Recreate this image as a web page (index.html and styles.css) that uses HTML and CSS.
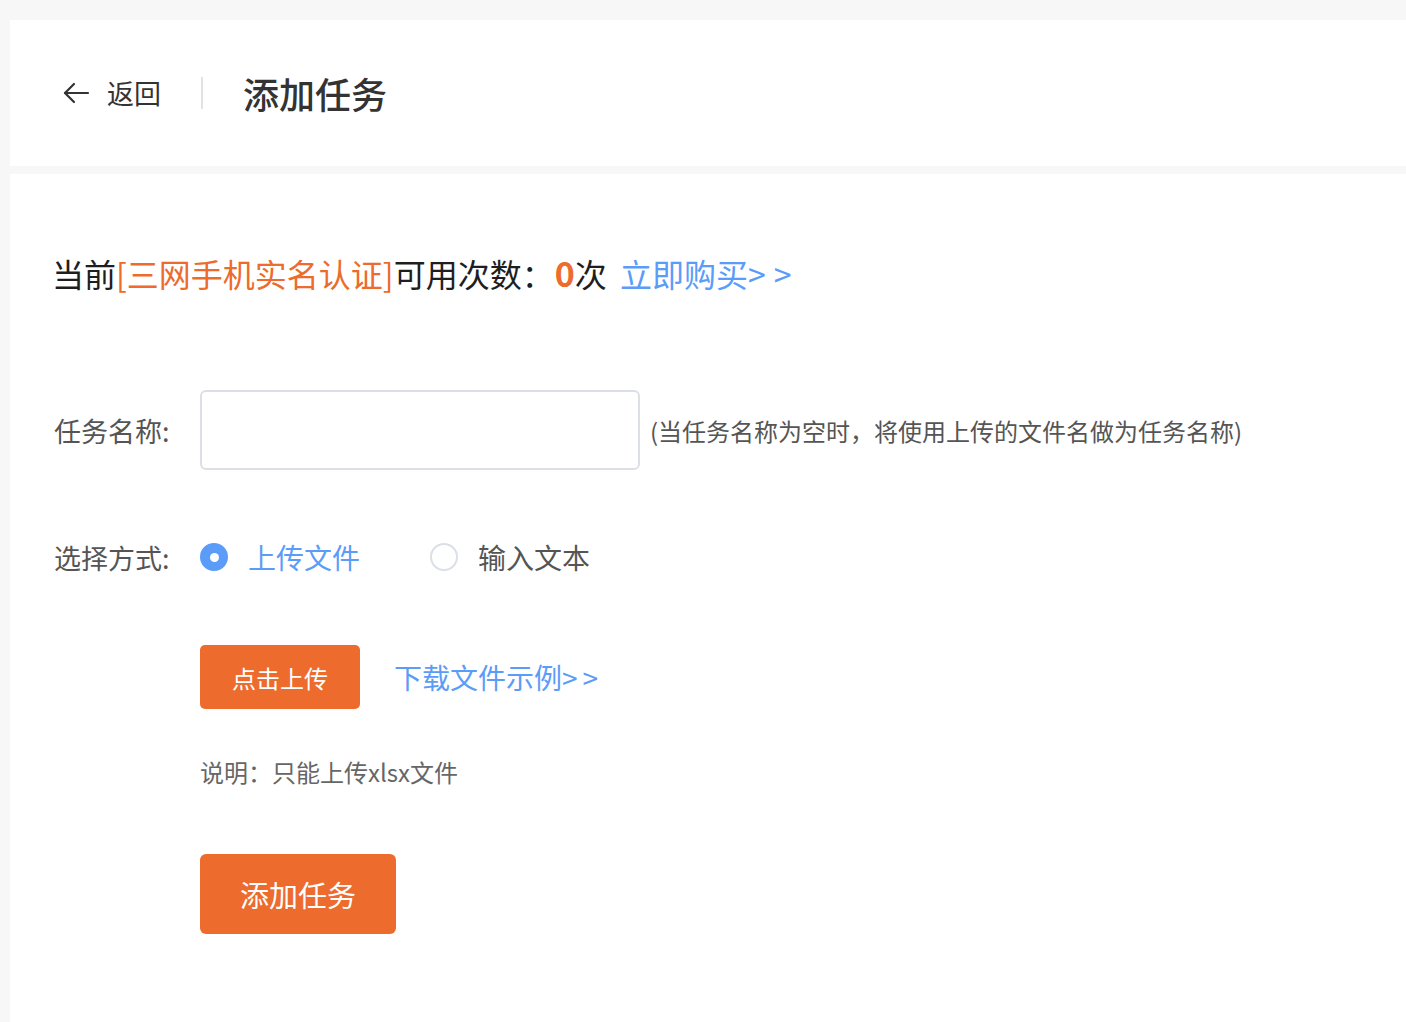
FILE: index.html
```html
<!DOCTYPE html>
<html lang="zh-CN">
<head>
<meta charset="utf-8">
<title>添加任务</title>
<link rel="stylesheet" href="styles.css">
</head>
<body>
<div class="page">
  <header class="topbar">
    <a class="back">
      <svg class="back-icon" width="28" height="24" viewBox="0 0 28 24" fill="none" stroke="#333" stroke-width="2.2" stroke-linecap="round" stroke-linejoin="round">
        <path d="M26 12H3"/>
        <path d="M12 3L3 12l9 9"/>
      </svg>
      <span class="back-text">返回</span>
    </a>
    <span class="divider"></span>
    <h1 class="title">添加任务</h1>
  </header>

  <main class="card">
    <div class="info">当前<span class="orange">[三网手机实名认证]</span>可用次数：<span class="count">0</span>次 <a class="buy">立即购买<span class="arrows">&gt;&gt;</span></a></div>

    <div class="row row-name">
      <label class="label">任务名称:</label>
      <input class="input" type="text">
      <span class="hint">(当任务名称为空时，将使用上传的文件名做为任务名称)</span>
    </div>

    <div class="row row-mode">
      <label class="label">选择方式:</label>
      <span class="radio checked"><span class="dot"></span></span>
      <span class="radio-text active">上传文件</span>
      <span class="radio"></span>
      <span class="radio-text">输入文本</span>
    </div>

    <div class="row row-upload">
      <button class="btn btn-upload">点击上传</button>
      <a class="download">下载文件示例<span class="arrows">&gt;&gt;</span></a>
    </div>

    <div class="row row-note">说明：只能上传xlsx文件</div>

    <div class="row row-submit">
      <button class="btn btn-submit">添加任务</button>
    </div>
  </main>
</div>
</body>
</html>
```

FILE: styles.css
```css
* { box-sizing: border-box; }
html, body {
  margin: 0;
  padding: 0;
  background: #f7f7f7;
  font-family: "Noto Sans CJK SC", "Noto Sans", sans-serif;
  color: #222;
}
.page {
  padding: 20px 0 0 10px;
  min-height: 1022px;
  display: flex;
  flex-direction: column;
}
.topbar {
  background: #fff;
  height: 146px;
  display: flex;
  align-items: center;
  padding-left: 52px;
}
.back {
  display: flex;
  align-items: center;
  gap: 17px;
  color: #333;
}
.back-icon { display: block; }
.back-text {
  font-size: 27px;
  line-height: 30px;
  color: #333;
}
.divider {
  width: 2px;
  height: 32px;
  background: #e2e2e6;
  margin: 0 40px 0 40px;
}
.title {
  margin: 0;
  font-size: 36px;
  font-weight: 500;
  color: #333;
  line-height: 40px;
}
.card {
  flex: 1;
  margin-top: 8px;
  background: #fff;
  padding: 75px 0 80px 42px;
}
.info {
  font-size: 32px;
  line-height: 48px;
  color: #1e1e1e;
  white-space: nowrap;
}
.orange { color: #ec6b2d; }
.count {
  color: #ec6b2d;
  font-weight: 700;
  font-size: 34px;
  margin-left: 1px;
}
.buy {
  color: #5b9cf8;
  margin-left: 6px;
}
.info .arrows {
  letter-spacing: 8px;
}
.arrows {
  letter-spacing: 5px;
}
.row {
  display: flex;
  align-items: center;
}
.label {
  width: 148px;
  font-size: 27px;
  color: #555;
  padding-left: 2px;
}
.row-name { margin-top: 93px; height: 80px; }
.input {
  width: 440px;
  height: 80px;
  border: 2px solid #dcdfe6;
  border-radius: 6px;
  outline: none;
  font-size: 24px;
  padding: 0 14px;
  background: #fff;
}
.hint {
  margin-left: 10px;
  font-size: 24px;
  color: #555;
}
.row-mode { margin-top: 67px; height: 40px; }
.radio {
  width: 28px;
  height: 28px;
  border-radius: 50%;
  border: 2px solid #dcdfe6;
  display: flex;
  align-items: center;
  justify-content: center;
  background: #fff;
}
.radio.checked {
  background: #5b9cf8;
  border-color: #5b9cf8;
}
.dot {
  width: 9px;
  height: 9px;
  border-radius: 50%;
  background: #fff;
}
.radio-text {
  margin-left: 20px;
  font-size: 28px;
  color: #555;
  margin-right: 70px;
}
.radio-text.active { color: #5b9cf8; }
.row-upload { margin-top: 68px; height: 64px; padding-left: 148px; }
.btn {
  border: none;
  background: #ec6b2d;
  color: #fff;
  font-family: "Noto Sans CJK SC", "Noto Sans", sans-serif;
  cursor: pointer;
}
.btn-upload {
  width: 160px;
  height: 64px;
  border-radius: 5px;
  font-size: 24px;
}
.download {
  margin-left: 34px;
  font-size: 28px;
  color: #5b9cf8;
}
.row-note {
  margin-top: 46px;
  padding-left: 148px;
  height: 32px;
  font-size: 24px;
  color: #666;
}
.row-submit { margin-top: 67px; padding-left: 148px; }
.btn-submit {
  width: 196px;
  height: 80px;
  border-radius: 6px;
  font-size: 29px;
}
```
